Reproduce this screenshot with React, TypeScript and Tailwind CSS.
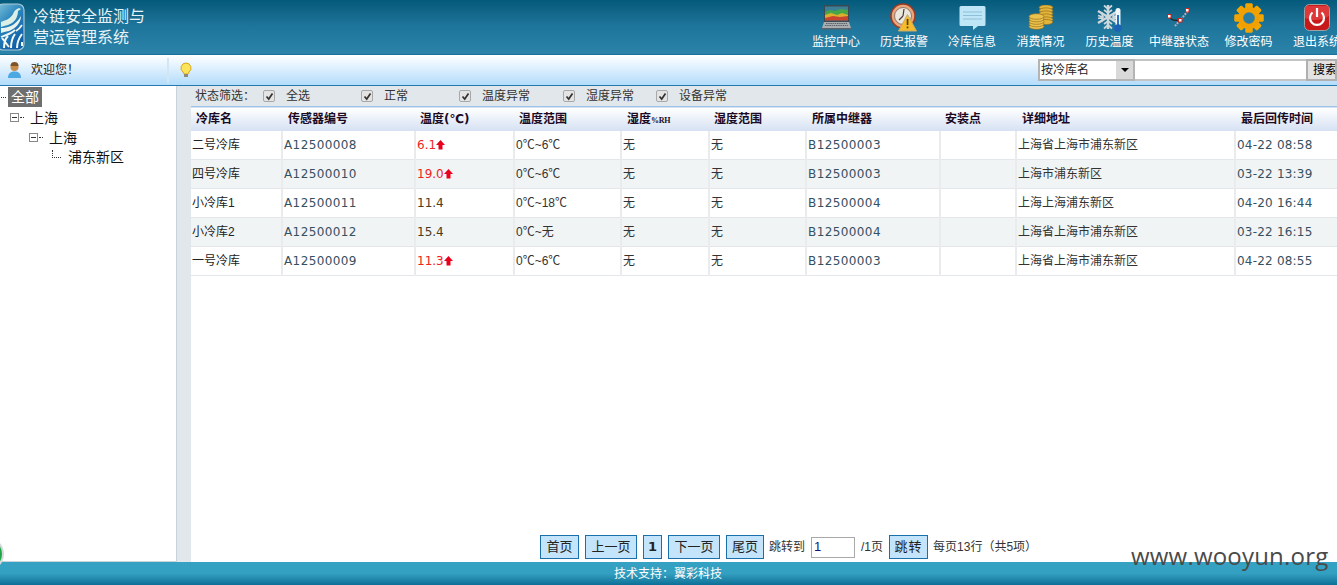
import React from "react";

const cjk = "font-['DejaVu_Sans','Noto_Sans_CJK_SC',sans-serif]";
const narrow = "font-['Liberation_Sans','Noto_Sans_CJK_SC',sans-serif]";

function Logo() {
  return (
    <svg width="26" height="52" viewBox="0 0 26 52" className="shrink-0">
      <defs>
        <linearGradient id="lg" x1="0" y1="0" x2="0.6" y2="1">
          <stop offset="0" stopColor="#7cc0d8" />
          <stop offset="0.45" stopColor="#2b86bd" />
          <stop offset="1" stopColor="#0f5fa6" />
        </linearGradient>
      </defs>
      <rect x="-3" y="4" width="27" height="46" rx="6" fill="url(#lg)" stroke="#a9c9d4" strokeWidth="1.2" />
      <path d="M1 22C6 20 10 19 13 14C14 11 16 9 19 8L21 9 18 11C18 18 14 23 8 25C5 26 3 26 1 27Z" fill="#dcefe6" />
      <path d="M1 28C8 28 15 26 21 16C21 23 15 29 9 31C5 32 3 32 1 33Z" fill="#e9f4ee" />
      <path d="M1 37C7 35 12 33 15 30M16 31C18 30 20 28 22 25" stroke="#edf6f2" strokeWidth="1.8" fill="none" />
      <path d="M4 48C4 43 5 39 8 36M2 38L9 47M11 48C11 42 12 38 15 34M17 48C17 43 19 38 22 34M22 46V42" stroke="#f2f8f4" strokeWidth="2" fill="none" />
    </svg>
  );
}

const Laptop = () => (
  <svg width="30" height="25" viewBox="0 0 30 25">
    <rect x="3" y="0" width="25" height="17" fill="#3b4a52" />
    <rect x="4" y="1.5" width="23" height="14" fill="#3d7f96" />
    <path d="M4 7l5-2 5 1 6-2 7 1v6H4z" fill="#45a548" />
    <path d="M4 10l6-2 6 2 5-2 6 2v3H4z" fill="#dcae2e" />
    <path d="M4 13l8-2 7 1 8-1v4.500H4z" fill="#c9452f" />
    <path d="M3 17h25l2 6H1z" fill="#a9adb0" />
    <path d="M5 18.500h21M4 20.500h23" stroke="#5a6268" strokeWidth="1" strokeDasharray="1.5 .7" />
    <rect x="1" y="23" width="29" height="1.500" fill="#59636a" />
  </svg>
);
const Clock = () => (
  <svg width="28" height="29" viewBox="0 0 28 29">
    <circle cx="13" cy="13" r="12" fill="#eaa67c" stroke="#9c3a20" strokeWidth="1.600" />
    <circle cx="13" cy="13" r="8.500" fill="#ebe7df" stroke="#8f7768" />
    <path d="M13 13l1-7M13 13l-4 4" stroke="#4a3b33" strokeWidth="1.200" />
    <path d="M17.500 11.500L26.500 28H8.500z" fill="#f5bb2c" stroke="#c9ab6a" />
    <rect x="16.700" y="16" width="1.700" height="6" fill="#5a4108" />
    <rect x="16.700" y="23.500" width="1.700" height="1.800" fill="#5a4108" />
  </svg>
);
const Chat = () => (
  <svg width="27" height="24" viewBox="0 0 27 24">
    <path d="M2 0h23a1.500 1.500 0 0 1 1.500 1.500v17a1.500 1.500 0 0 1-1.500 1.500h-6l-5 4v-4H2a1.500 1.500 0 0 1-1.500-1.500v-17A1.500 1.500 0 0 1 2 0z" fill="#bfe6f6" />
    <path d="M4 6h19M4 9.500h19M4 13h19" stroke="#8ebfd8" strokeWidth="1" />
  </svg>
);
const Coins = () => (
  <svg width="26" height="25" viewBox="0 0 26 25">
    {[2.500, 5.500, 8.500, 11.500, 14.500, 17].map((y) => <ellipse key={y} cx="18" cy={y} rx="6.800" ry="2.600" fill="#e3b43c" stroke="#96701a" strokeWidth="0.700" />)}
    {[21.500, 19, 16.500, 14, 11.500].map((y) => <ellipse key={y} cx="8.500" cy={y} rx="7.500" ry="2.800" fill="#ecc24e" stroke="#96701a" strokeWidth="0.700" />)}
  </svg>
);
const Snow = () => (
  <svg width="26" height="28" viewBox="0 0 26 28">
    <g stroke="#ced8dc" fill="none" strokeWidth="2.500">
      <path d="M11 1v24M1 7l20 12M21 7L1 19" />
      <path d="M7 1.500l4 3.500 4-3.500M7 24.500l4-3.500 4 3.500M1 11.500l5 1.500-1.500 5M21 11.500L16 13l1.500 5M1 14.500L6 13 4.500 8M21 14.500L16 13l1.500-5M7 6l4 3 4-3M7 20l4-3 4 3" strokeWidth="1.700" />
    </g>
    <rect x="18.500" y="4" width="5" height="19" rx="2.500" fill="#eef6f9" />
    <circle cx="21" cy="24" r="3.800" fill="#1a62b5" />
    <rect x="20.100" y="11" width="1.800" height="12" fill="#1a62b5" />
  </svg>
);
const Relay = () => (
  <svg width="24" height="20" viewBox="0 0 24 20">
    <path d="M21 3L8 18" stroke="#b9aab8" strokeWidth="2" strokeDasharray="2 1" />
    <path d="M2 8c2 5 6 5 11 4" stroke="#222" strokeWidth="1.200" fill="none" />
    {[[20, 2], [2, 8], [13, 12]].map(([x, y]) => <rect key={x} x={x - 1.500} y={y - 1.500} width="3.500" height="3.500" fill="#fff" stroke="#d3231c" strokeWidth="1" />)}
  </svg>
);
const Gear = () => {
  const teeth = [0, 45, 90, 135, 180, 225, 270, 315];
  return (
    <svg width="30" height="30" viewBox="0 0 30 30">
      {teeth.map((a) => <rect key={a} x="11.500" y="0.500" width="7" height="29" rx="1" fill="#f2a400" transform={`rotate(${a} 15 15)`} />)}
      <circle cx="15" cy="15" r="11" fill="#f0a000" />
      <circle cx="15" cy="15" r="5.800" fill="#2a7ea4" />
    </svg>
  );
};
const Power = () => (
  <svg width="26" height="27" viewBox="0 0 26 27">
    <rect x="0.500" y="0.500" width="25" height="26" rx="5" fill="#c8191a" stroke="#9aa3a6" />
    <path d="M1 2h24v10C17 17 8 17 1 14z" fill="#e6474a" opacity="0.7" />
    <path d="M8.500 8.500a7 7 0 1 0 9 0" stroke="#fff" strokeWidth="2.200" fill="none" />
    <rect x="11.900" y="4" width="2.200" height="9" fill="#fff" />
  </svg>
);
const User = () => (
  <svg width="15" height="17" viewBox="0 0 15 17">
    <circle cx="7.500" cy="5" r="4" fill="#c68a4b" />
    <path d="M3.500 4a4 4 0 0 1 8 0z" fill="#7d5427" />
    <path d="M1 16c0-5 3-6.500 6.500-6.500S14 11 14 16z" fill="#4aa8e2" />
  </svg>
);
const Bulb = () => (
  <svg width="12" height="16" viewBox="0 0 12 16">
    <path d="M6 1a5 5 0 0 0-3 9l1 2h4l1-2a5 5 0 0 0-3-9z" fill="#fbe35a" stroke="#d9a520" />
    <rect x="4" y="12" width="4" height="3" fill="#8a8a80" />
  </svg>
);
const Up = () => (
  <svg width="9" height="10" viewBox="0 0 9 10" className="inline-block align-[-1px]">
    <path d="M4.500 0L9 5H6.500v4.500h-4V5H0z" fill="#e8001c" />
  </svg>
);

const nav = [
  ["监控中心", Laptop, "w-[68px]"],
  ["历史报警", Clock, "w-[68px]"],
  ["冷库信息", Chat, "w-[68px]"],
  ["消费情况", Coins, "w-[69px]"],
  ["历史温度", Snow, "w-[69px]"],
  ["中继器状态", Relay, "w-[70px]"],
  ["修改密码", Gear, "w-[69px]"],
  ["退出系统", Power, "w-[68px]"],
] as const;

const headers: React.ReactNode[] = [
  "冷库名",
  "传感器编号",
  <>温度(℃)</>,
  "温度范围",
  <>湿度<span className="font-['Liberation_Serif',serif] text-[8px] tracking-[-0.3px]">%RH</span></>,
  "湿度范围",
  "所属中继器",
  "安装点",
  "详细地址",
  "最后回传时间",
];
const widths = ["w-[91px]", "w-[133px]", "w-[99px]", "w-[107px]", "w-[88px]", "w-[97px]", "w-[134px]", "w-[76px]", "w-[219px]", "w-[102px]"];
const headPad = ["pl-[5px]", "pl-[6px]", "pl-[5px]", "pl-[5px]", "pl-[6px]", "pl-[5px]", "pl-[6px]", "pl-[5px]", "pl-[6px]", "pl-[6px]"];

const rows = [
  ["二号冷库", "A12500008", "6.1", true, "0℃~6℃", "B12500003", "上海省上海市浦东新区", "04-22 08:58"],
  ["四号冷库", "A12500010", "19.0", true, "0℃~6℃", "B12500003", "上海市浦东新区", "03-22 13:39"],
  ["小冷库1", "A12500011", "11.4", false, "0℃~18℃", "B12500004", "上海上海浦东新区", "04-20 16:44"],
  ["小冷库2", "A12500012", "15.4", false, "0℃~无", "B12500004", "上海省上海市浦东新区", "03-22 16:15"],
  ["一号冷库", "A12500009", "11.3", true, "0℃~6℃", "B12500003", "上海省上海市浦东新区", "04-22 08:55"],
] as const;

const filters = [
  ["全选", "w-[98px]"],
  ["正常", "w-[98px]"],
  ["温度异常", "w-[104px]"],
  ["湿度异常", "w-[93px]"],
  ["设备异常", "w-[90px]"],
];

function Check() {
  return (
    <span className="flex h-[12px] w-[12px] shrink-0 items-center justify-center rounded-[2px] border border-[#a8a8a8] bg-[#e4e4e4]">
      <svg width="9" height="9" viewBox="0 0 9 9"><path d="M1.500 4.500L3.700 7 7.500 1.500" stroke="#333" strokeWidth="1.700" fill="none" /></svg>
    </span>
  );
}

function PageBtn({ children, className = "" }: { children: React.ReactNode; className?: string }) {
  return (
    <span className={`flex h-[24px] items-center justify-center border border-[#1a70aa] bg-[#c3e4fa] text-[13px] text-[#222] ${className}`}>
      {children}
    </span>
  );
}

export default function App() {
  return (
    <div className={`relative flex h-[585px] w-[1337px] flex-col overflow-hidden bg-white ${cjk}`}>
      <header className="flex h-[55px] shrink-0 items-start justify-between overflow-hidden border-b border-[#176f9a] bg-gradient-to-b from-[#045a7a] via-[#1f769c] to-[#2b83aa]">
        <div className="flex items-start">
          <Logo />
          <div className="ml-[7px] mt-[6px] text-[16px] leading-[21px] text-[#e8f3f7]">
            <div>冷链安全监测与</div>
            <div>营运管理系统</div>
          </div>
        </div>
        <nav className="-mr-[14px] flex">
          {nav.map(([label, Icon, w]) => (
            <div key={label} className={`flex ${w} shrink-0 flex-col items-center`}>
              <div className="flex h-[32px] items-center justify-center pt-[3px]"><Icon /></div>
              <span className="mt-[2px] whitespace-nowrap text-[12px] leading-[17px] text-white">{label}</span>
            </div>
          ))}
        </nav>
      </header>

      <div className="flex h-[31px] shrink-0 items-center border-b border-[#2679ad] bg-gradient-to-b from-white to-[#b3dcfb]">
        <div className="ml-[7px] flex h-[25px] w-[162px] items-center gap-[9px] border-r-2 border-[#d3e6f4]">
          <User />
          <span className="text-[12px] text-[#222]">欢迎您！</span>
        </div>
        <div className="ml-[11px]"><Bulb /></div>
        <div className="ml-auto mt-[4px] flex h-[22px] items-stretch self-start">
          <div className="flex w-[97px] items-center justify-between border-2 border-[#b4b4b4] bg-white pl-[1px] text-[12px] text-[#222]">
            <span>按冷库名</span>
            <span className="flex h-full w-[17px] items-center justify-center bg-[#d9d9d9]">
              <span className="h-0 w-0 border-x-[4px] border-t-[4px] border-x-transparent border-t-black" />
            </span>
          </div>
          <div className="w-[171px] border-y-2 border-[#c4c4c4] bg-white" />
          <div className="w-[31px] overflow-hidden whitespace-nowrap border-2 border-[#b0b0b0] bg-[#e3e3e3] pl-[5px] text-[12px] leading-[18px] text-black">搜索</div>
        </div>
      </div>

      <div className="flex min-h-0 flex-1">
        <aside className="w-[177px] shrink-0 border-b border-r border-[#c8d3da] bg-white pt-[1px] text-[14px] leading-[20px] text-[#111]">
          <div className="flex h-[20px] items-center">
            <span className="ml-[1px] w-[5px] border-t border-dotted border-[#333]" />
            <span className="ml-[2px] h-[20px] bg-[#6e6e6e] px-[3px] text-white">全部</span>
          </div>
          <div className="flex h-[20px] items-center pl-[10px]">
            <span className="flex h-[9px] w-[9px] items-center justify-center border border-[#888]"><span className="h-px w-[5px] bg-[#333]" /></span>
            <span className="ml-[1px] w-[4px] border-t border-dotted border-[#333]" />
            <span className="ml-[6px] pt-px">上海</span>
          </div>
          <div className="flex h-[20px] items-center pl-[29px]">
            <span className="flex h-[9px] w-[9px] items-center justify-center border border-[#888]"><span className="h-px w-[5px] bg-[#333]" /></span>
            <span className="ml-[1px] w-[4px] border-t border-dotted border-[#333]" />
            <span className="ml-[6px] pt-px">上海</span>
          </div>
          <div className="flex h-[20px] items-center pl-[52px]">
            <span className="h-[8px] w-[9px] -translate-y-[3px] border-b border-l border-dotted border-[#333]" />
            <span className="ml-[7px]">浦东新区</span>
          </div>
        </aside>

        <main className="flex min-w-0 flex-1 flex-col bg-white">
          <div className="flex h-[20px] shrink-0 items-center bg-[#e1e7ea] pl-[18px] text-[12px] text-[#333]">
            <span className="w-[68px]">状态筛选：</span>
            {filters.map(([f, w]) => (
              <span key={f} className={`flex ${w} shrink-0 items-center gap-[11px]`}>
                <Check />
                <span>{f}</span>
              </span>
            ))}
          </div>
          <div className="flex min-h-0 flex-1">
            <div className="w-[14px] shrink-0 bg-[#e1e7ea]" />
            <div className="flex min-w-0 flex-1 flex-col">
              <table className="w-[1146px] table-fixed border-collapse text-[12px]">
                <thead>
                  <tr className="h-[24px] border-t border-[#9cc4e8] bg-gradient-to-b from-white to-[#d6e1f3]">
                    {headers.map((h, i) => (
                      <th key={i} className={`${widths[i]} ${headPad[i]} whitespace-nowrap text-left font-bold text-[#1a0a24]`}>{h}</th>
                    ))}
                  </tr>
                </thead>
                <tbody>
                  {rows.map((r, i) => (
                    <tr key={r[0]} className={`h-[29px] border-b border-[#e4e7e9] ${i % 2 ? "bg-[#f1f4f5]" : "bg-white"}`}>
                      <td className={`${narrow} whitespace-nowrap pl-[1px] text-[#222]`}>{r[0]}</td>
                      <td className="border-l-2 border-[#e9ebec] pl-[1px] tracking-[0.4px] text-[#35505f]">{r[1]}</td>
                      <td className="border-l-2 border-[#e9ebec] pl-[1px] text-[#333]">
                        {r[3] ? <span className="text-[#f0231c]">{r[2]}<Up /></span> : <span className="text-[#4a3b20]">{r[2]}</span>}
                      </td>
                      <td className={`${narrow} border-l-2 border-[#e9ebec] pl-[1px] text-[#333]`}>{r[4]}</td>
                      <td className="border-l-2 border-[#e9ebec] pl-[1px] text-[#333]">无</td>
                      <td className="border-l-2 border-[#e9ebec] pl-[1px] text-[#333]">无</td>
                      <td className="border-l-2 border-[#e9ebec] pl-[1px] tracking-[0.4px] text-[#35505f]">{r[5]}</td>
                      <td className="border-l-2 border-[#e9ebec]" />
                      <td className="whitespace-nowrap border-l-2 border-[#e9ebec] pl-[1px] text-[#333]">{r[6]}</td>
                      <td className="whitespace-nowrap border-l-2 border-[#e9ebec] pl-[1px] tracking-[0.2px] text-[#35505f]">{r[7]}</td>
                    </tr>
                  ))}
                </tbody>
              </table>
              <div className="mb-[3px] mt-auto flex items-center pl-[349px] text-[12px] text-[#333]">
                <PageBtn className="w-[39px]">首页</PageBtn>
                <PageBtn className="ml-[6px] w-[52px]">上一页</PageBtn>
                <PageBtn className="ml-[6px] w-[19px] font-bold">1</PageBtn>
                <PageBtn className="ml-[6px] w-[52px]">下一页</PageBtn>
                <PageBtn className="ml-[6px] w-[38px]">尾页</PageBtn>
                <span className="ml-[5px] whitespace-nowrap">跳转到</span>
                <span className={`${narrow} ml-[6px] h-[21px] w-[44px] border border-[#a9a9a9] pl-[2px] text-[13px] leading-[18px] text-[#141473]`}>1</span>
                <span className={`${narrow} ml-[6px] whitespace-nowrap`}>/1页</span>
                <PageBtn className="ml-[6px] w-[39px] tracking-[1px]">跳转</PageBtn>
                <span className={`${narrow} ml-[5px] whitespace-nowrap`}>每页13行（共5项）</span>
              </div>
            </div>
          </div>
        </main>
      </div>

      <footer className="flex h-[23px] shrink-0 items-center justify-center bg-gradient-to-b from-[#35a2c3] via-[#34a0c1] to-[#0a7096] text-[12px] text-white">
        <span className="ml-[-1px]">技术支持：翼彩科技</span>
      </footer>

      <div className="absolute left-[-30px] top-[537px] h-[34px] w-[34px] rounded-full border-2 border-[#d5d9dc] bg-[#22a548]" />
      <div className="absolute left-[1131px] top-[540px] font-['Open_Sans',sans-serif] text-[24px] leading-[32px] tracking-[0.2px] text-[#4a4a4a]">www.wooyun.org</div>
    </div>
  );
}
